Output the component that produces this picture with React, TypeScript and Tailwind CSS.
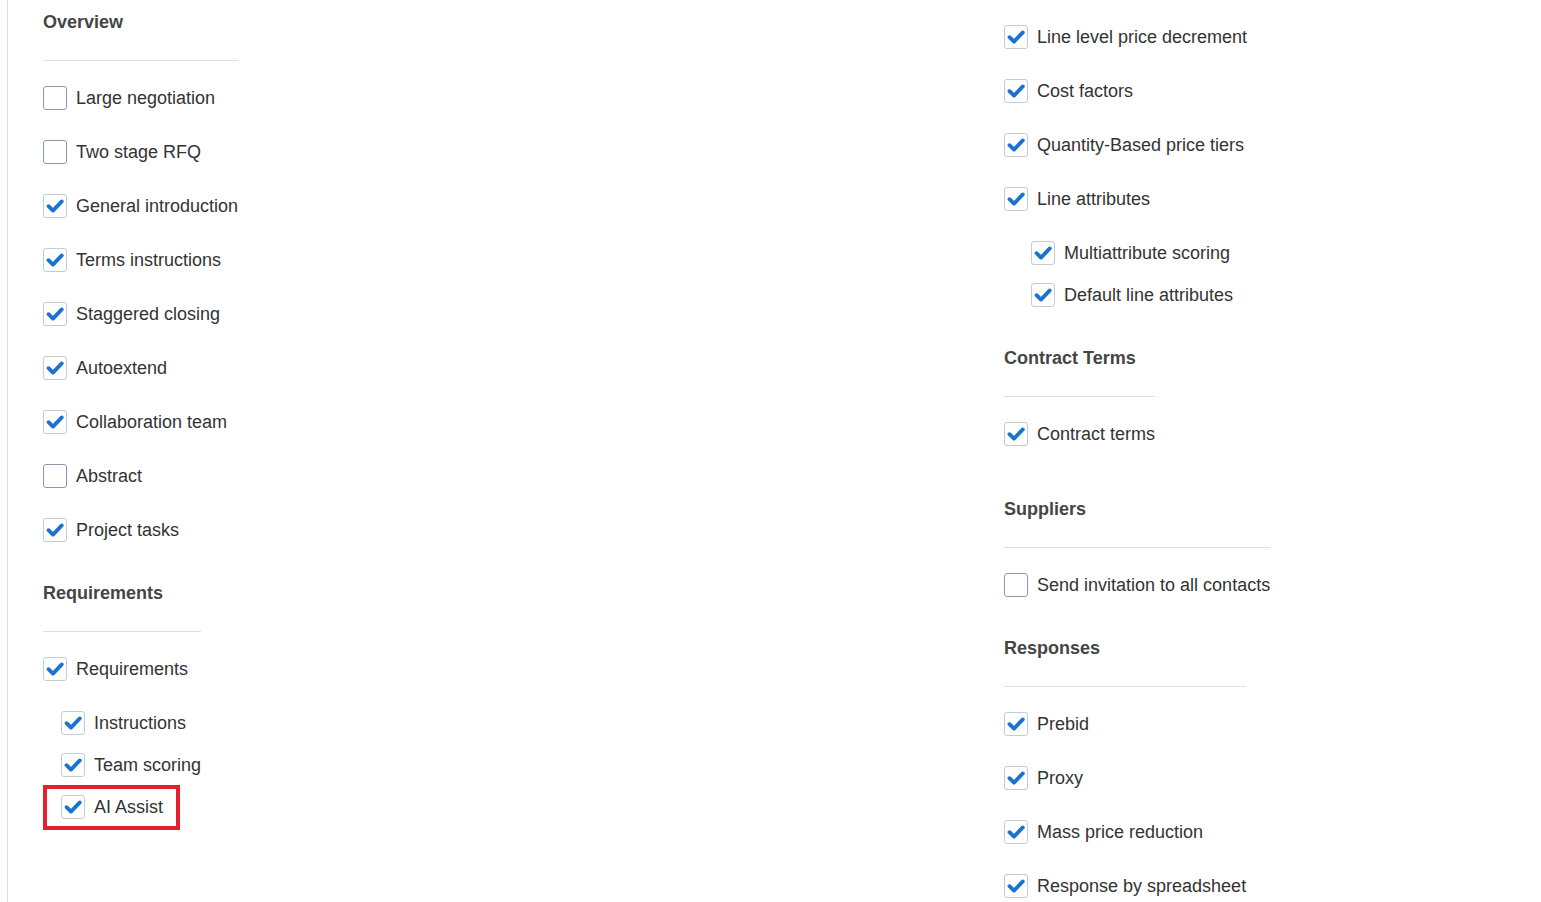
import React from "react";

type Item = { label: string; checked: boolean; sub?: boolean };

const font = "font-['Liberation_Sans',Arial,sans-serif]";

function Box({ checked }: { checked: boolean }) {
  return (
    <span
      className={`flex h-6 w-6 shrink-0 items-center justify-center rounded-[3px] border bg-white ${
        checked ? "border-[#c3cbd3]" : "border-[#8e99a5]"
      }`}
    >
      {checked && (
        <svg width="20" height="20" viewBox="0 0 20 20">
          <path d="M3.5 10.2 L8 14.6 L16.8 5.4" fill="none" stroke="#1a73d0" strokeWidth="3.8" strokeLinecap="round" strokeLinejoin="round" />
        </svg>
      )}
    </span>
  );
}

function Row({ item, indent }: { item: Item; indent: string }) {
  return (
    <div className={`flex h-6 items-center gap-[9px] ${item.sub ? indent : ""}`}>
      <Box checked={item.checked} />
      <span className="text-[18px] leading-6 text-[#333333] whitespace-nowrap">{item.label}</span>
    </div>
  );
}

function Heading({ title }: { title: string }) {
  return (
    <>
      <div className="h-6 text-[18px] font-bold leading-6 text-[#454545]">{title}</div>
      <div className="mt-[26px] border-t border-[#d9e0e6]" />
    </>
  );
}

export default function App() {
  return (
    <div className={`${font} flex min-h-[902px] bg-white`}>
      <div className="ml-[7px] w-px bg-[#d7dee5]" />
      <div className="flex pl-[35px] pt-px">
        {/* left column */}
        <div className="w-[961px] pt-[9px]">
          <div className="w-fit">
            <Heading title="Overview" />
            <div className="mt-[25px] flex flex-col gap-[30px]">
              <Row item={{ label: "Large negotiation", checked: false }} indent="" />
              <Row item={{ label: "Two stage RFQ", checked: false }} indent="" />
              <Row item={{ label: "General introduction", checked: true }} indent="" />
              <Row item={{ label: "Terms instructions", checked: true }} indent="" />
              <Row item={{ label: "Staggered closing", checked: true }} indent="" />
              <Row item={{ label: "Autoextend", checked: true }} indent="" />
              <Row item={{ label: "Collaboration team", checked: true }} indent="" />
              <Row item={{ label: "Abstract", checked: false }} indent="" />
              <Row item={{ label: "Project tasks", checked: true }} indent="" />
            </div>
          </div>

          <div className="mt-[39px] w-fit">
            <Heading title="Requirements" />
            <div className="mt-[25px]">
              <Row item={{ label: "Requirements", checked: true }} indent="" />
              <div className="mt-[30px] flex flex-col gap-[18px]">
                <Row item={{ label: "Instructions", checked: true, sub: true }} indent="pl-[18px]" />
                <Row item={{ label: "Team scoring", checked: true, sub: true }} indent="pl-[18px]" />
              </div>
            </div>
          </div>
          <div className="mt-[8px] w-fit border-4 border-[#e3202b] pb-[7px] pl-[14px] pr-[13px] pt-[6px]">
            <Row item={{ label: "AI Assist", checked: true }} indent="" />
          </div>
        </div>

        {/* right column */}
        <div className="pt-6">
          <div className="flex flex-col gap-[30px]">
            <Row item={{ label: "Line level price decrement", checked: true }} indent="" />
            <Row item={{ label: "Cost factors", checked: true }} indent="" />
            <Row item={{ label: "Quantity-Based price tiers", checked: true }} indent="" />
            <Row item={{ label: "Line attributes", checked: true }} indent="" />
          </div>
          <div className="mt-[30px] flex flex-col gap-[18px]">
            <Row item={{ label: "Multiattribute scoring", checked: true, sub: true }} indent="pl-[27px]" />
            <Row item={{ label: "Default line attributes", checked: true, sub: true }} indent="pl-[27px]" />
          </div>

          <div className="mt-[39px] w-fit">
            <Heading title="Contract Terms" />
            <div className="mt-[25px]">
              <Row item={{ label: "Contract terms", checked: true }} indent="" />
            </div>
          </div>

          <div className="mt-[51px] w-fit">
            <Heading title="Suppliers" />
            <div className="mt-[25px]">
              <Row item={{ label: "Send invitation to all contacts", checked: false }} indent="" />
            </div>
          </div>

          <div className="mt-[39px] w-fit">
            <Heading title="Responses" />
            <div className="mt-[25px] flex flex-col gap-[30px]">
              <Row item={{ label: "Prebid", checked: true }} indent="" />
              <Row item={{ label: "Proxy", checked: true }} indent="" />
              <Row item={{ label: "Mass price reduction", checked: true }} indent="" />
              <Row item={{ label: "Response by spreadsheet", checked: true }} indent="" />
            </div>
          </div>
        </div>
      </div>
    </div>
  );
}
